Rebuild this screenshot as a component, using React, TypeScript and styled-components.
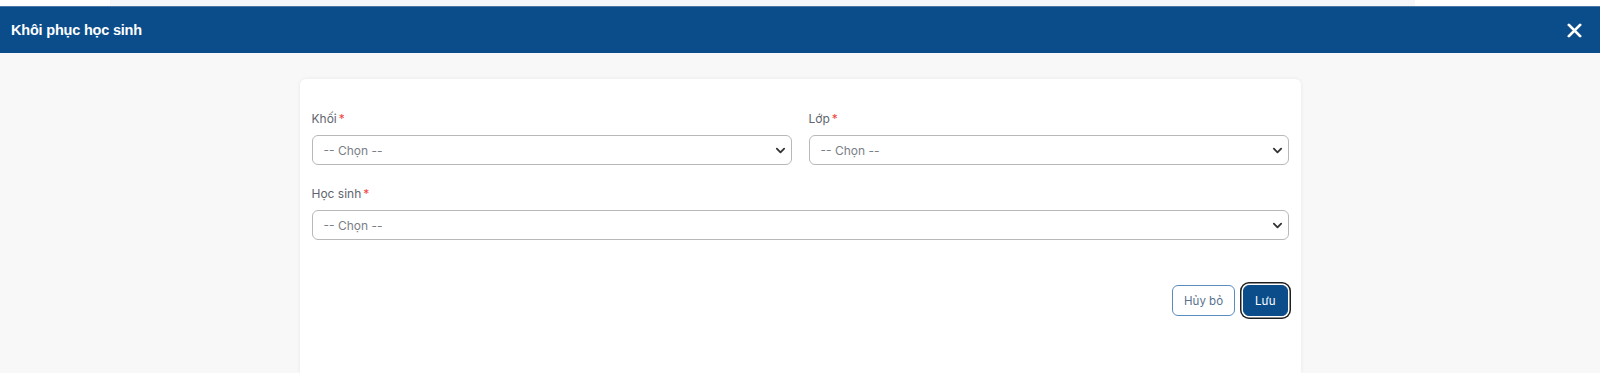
import React from 'react'
import styled, { createGlobalStyle } from 'styled-components'

const GlobalStyle = createGlobalStyle`
  html, body {
    margin: 0;
    padding: 0;
    background: #f8f8f8;
    font-family: Inter, "Noto Sans", sans-serif;
  }
`

const Page = styled.div`
  min-height: 373px;
  display: flex;
  flex-direction: column;
`

const TopStrip = styled.div`
  height: 6px;
  background: #ffffff;
  display: flex;
  padding-left: 110px;
`

const TopGhost = styled.div`
  width: 1305px;
  height: 6px;
  background: #f5f6fa;
`

const Header = styled.div`
  height: 47px;
  background: #0b4d8a;
  border-top: 1px solid #4a78a6;
  box-sizing: border-box;
  display: flex;
  align-items: center;
  justify-content: space-between;
  padding: 0 18px 0 11px;
`

const Title = styled.h1`
  margin: 0;
  color: #ffffff;
  font-family: "Liberation Sans", Arial, sans-serif;
  font-weight: 700;
  font-size: 14.5px;
  letter-spacing: -0.2px;
`

const CloseButton = styled.button`
  border: none;
  background: transparent;
  padding: 0;
  display: flex;
  cursor: pointer;
`

const Body = styled.div`
  flex: 1;
  display: flex;
  justify-content: center;
  padding-top: 26px;
`

const Card = styled.div`
  width: 1001px;
  box-sizing: border-box;
  background: #ffffff;
  border-radius: 6px 6px 0 0;
  box-shadow: 0 0 4px rgba(0, 0, 0, 0.07);
  padding: 31px 12px 56px 12px;
  display: flex;
  flex-direction: column;
`

const Row = styled.div<{ $cols: number }>`
  display: grid;
  grid-template-columns: repeat(${p => p.$cols}, 1fr);
  column-gap: 17px;
  margin-bottom: 20px;
`

const Field = styled.div`
  display: flex;
  flex-direction: column;
`

const Label = styled.label`
  font-size: 12px;
  line-height: 18px;
  color: #60656e;
  margin-bottom: 7px;
`

const Required = styled.span`
  color: #ef4444;
  margin-left: 2px;
`

const SelectWrap = styled.div`
  position: relative;
  height: 30px;
`

const Select = styled.select`
  appearance: none;
  width: 100%;
  height: 30px;
  box-sizing: border-box;
  border: 1px solid #b8b8b8;
  border-radius: 6px;
  background: #ffffff;
  padding: 0 30px 0 11px;
  font-family: Inter, "Noto Sans", sans-serif;
  font-size: 12px;
  color: #7a7e85;
  outline: none;
`

const Chevron = styled.svg`
  position: absolute;
  right: 6px;
  top: 10px;
  pointer-events: none;
`

const Actions = styled.div`
  display: flex;
  justify-content: flex-end;
  gap: 8px;
  margin-top: 25px;
  padding-right: 1px;
`

const Button = styled.button<{ $primary?: boolean }>`
  height: 31px;
  padding: 0 ${p => (p.$primary ? '11px' : '11px')};
  border-radius: 6px;
  font-family: Inter, "Noto Sans", sans-serif;
  font-size: 11.5px;
  cursor: pointer;
  border: 1px solid ${p => (p.$primary ? '#0b4d8a' : '#5b8cc0')};
  background: ${p => (p.$primary ? '#0b4d8a' : '#ffffff')};
  color: ${p => (p.$primary ? '#ffffff' : '#56708f')};
  box-shadow: ${p => (p.$primary ? '0 0 0 1.5px #ffffff, 0 0 0 3px #1f1f1f' : 'none')};
`

const ChevronIcon = () => (
  <Chevron width="11" height="11" viewBox="0 0 12 12">
    <path d="M2 4l4 4 4-4" fill="none" stroke="#333" strokeWidth="2" strokeLinecap="round" strokeLinejoin="round" />
  </Chevron>
)

const SelectField = ({ label }: { label: string }) => (
  <Field>
    <Label>
      {label}
      <Required>*</Required>
    </Label>
    <SelectWrap>
      <Select defaultValue="">
        <option value="">-- Chọn --</option>
      </Select>
      <ChevronIcon />
    </SelectWrap>
  </Field>
)

export default function App() {
  return (
    <>
      <GlobalStyle />
      <Page>
        <TopStrip>
          <TopGhost />
        </TopStrip>
        <Header>
          <Title>Khôi phục học sinh</Title>
          <CloseButton aria-label="Đóng">
            <svg width="15" height="15" viewBox="0 0 16 16">
              <path d="M2 2l12 12M14 2L2 14" stroke="#ffffff" strokeWidth="3" strokeLinecap="round" />
            </svg>
          </CloseButton>
        </Header>
        <Body>
          <Card>
            <Row $cols={2}>
              <SelectField label="Khối" />
              <SelectField label="Lớp" />
            </Row>
            <Row $cols={1}>
              <SelectField label="Học sinh" />
            </Row>
            <Actions>
              <Button>Hủy bỏ</Button>
              <Button $primary>Lưu</Button>
            </Actions>
          </Card>
        </Body>
      </Page>
    </>
  )
}
